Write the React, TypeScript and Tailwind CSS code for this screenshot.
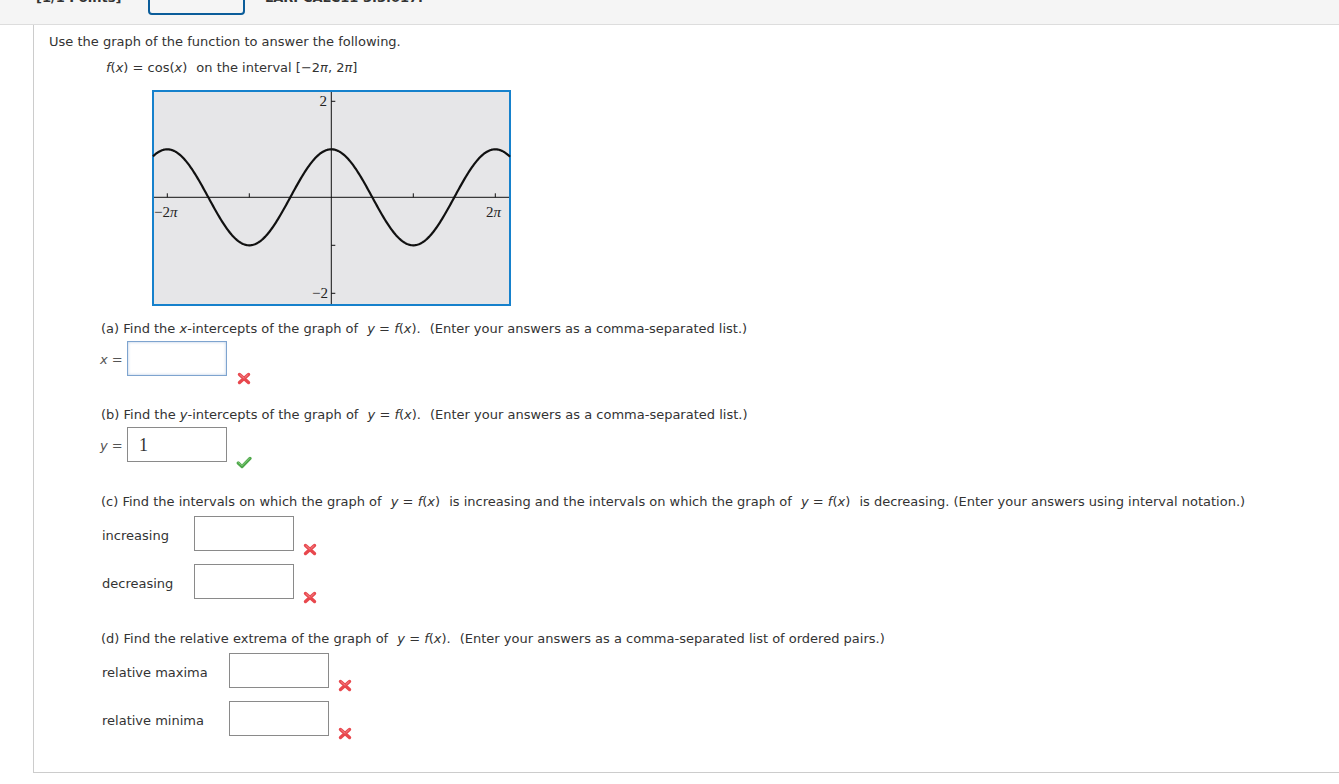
import React from "react";

const F = () => (
  <span>
    <i>f</i>(<i>x</i>)
  </span>
);

const YF = ({ end }: { end?: boolean }) => (
  <span className={end ? "ml-[5px]" : "mx-[5px]"}>
    <i>y</i> = <F />
  </span>
);

const RedX = () => (
  <svg width="14" height="13" viewBox="0 0 14 13">
    <path d="M2.5 2.5 L11.5 10.5 M11.5 2.5 L2.5 10.5" stroke="#e8474d" strokeWidth="3.4" strokeLinecap="round" fill="none" />
    <path d="M3 2.7 L7 6.2 M11 2.7 L8 5.4" stroke="#f3888c" strokeWidth="1" strokeLinecap="round" fill="none" />
  </svg>
);

const Check = () => (
  <svg width="16" height="13" viewBox="0 0 16 13">
    <path d="M2.2 7 L6 10.6 L14 2.4" stroke="#4ea84a" strokeWidth="3.2" strokeLinecap="round" strokeLinejoin="round" fill="none" />
    <path d="M2.6 6.7 L6 9.6 L13.4 2.4" stroke="#86cc7f" strokeWidth="1" strokeLinecap="round" fill="none" />
  </svg>
);

function Graph() {
  const W = 359;
  const H = 216;
  const ox = 179.3;
  const oy = 107.3;
  const pi = 82;
  const u = 48;
  const pts: string[] = [];
  for (let px = 1; px <= W - 1; px += 1) {
    const x = ((px - ox) / pi) * Math.PI;
    const y = oy - u * Math.cos(x);
    pts.push(`${px.toFixed(1)},${y.toFixed(2)}`);
  }
  const xt = [-2, -1, 1, 2].map((k) => ox + k * pi);
  const yt = [-2, -1, 1, 2].map((k) => oy - k * u);
  return (
    <svg width={W} height={H} viewBox={`0 0 ${W} ${H}`} className="block">
      <rect x="1" y="1" width={W - 2} height={H - 2} fill="#e6e6e8" stroke="#1681cc" strokeWidth="2" />
      <line x1="2" y1={oy} x2={W - 2} y2={oy} stroke="#111" strokeWidth="1" />
      <line x1={ox} y1="2" x2={ox} y2={H - 2} stroke="#111" strokeWidth="1" />
      {xt.map((x) => (
        <line key={x} x1={x} y1={oy - 4} x2={x} y2={oy} stroke="#111" strokeWidth="1" />
      ))}
      {yt.map((y) => (
        <line key={y} x1={ox} y1={y} x2={ox + 4} y2={y} stroke="#111" strokeWidth="1" />
      ))}
      <polyline points={pts.join(" ")} fill="none" stroke="#111" strokeWidth="2.2" strokeLinejoin="round" />
      <g fontFamily="'Liberation Serif', 'DejaVu Serif', serif" fontSize="15" fill="#222">
        <text x="175" y="16" textAnchor="end">2</text>
        <text x="176" y="208" textAnchor="end">−2</text>
        <text x="2" y="127">
          −2<tspan fontStyle="italic">π</tspan>
        </text>
        <text x="334" y="127">
          2<tspan fontStyle="italic">π</tspan>
        </text>
      </g>
    </svg>
  );
}

const Box = ({ focus, value }: { focus?: boolean; value?: string }) => (
  <div
    className={
      "w-[100px] h-[35px] shrink-0 bg-white flex items-center pl-[11px] " +
      (focus ? "border border-[#7ea4cf] shadow-[inset_0_0_3px_rgba(126,164,207,0.6)]" : "border border-[#8a8a8a]")
    }
  >
    {value ? (
      <span className="text-[18px] text-[#333]" style={{ fontFamily: "'Liberation Serif', serif" }}>
        {value}
      </span>
    ) : null}
  </div>
);

export default function App() {
  return (
    <div
      className="w-[1339px] h-[784px] bg-white text-[#333] text-[13px] leading-[16px] overflow-hidden"
      style={{ fontFamily: "'DejaVu Sans', Verdana, sans-serif" }}
    >
      {/* top bar */}
      <div className="h-[25px] bg-[#f5f5f5] border-b border-[#dddddd] overflow-hidden flex items-start">
        <div className="ml-[36px] -mt-[10px] w-[92px] font-bold text-[#333] text-[13px] leading-[16px] whitespace-nowrap">[1/1 Points]</div>
        <div className="ml-[20px] -mt-[16px] w-[97px] h-[31px] border-2 border-[#0b5d9a] rounded-[4px] flex items-end justify-center pb-[9px] font-bold text-[#0b5d9a] text-[13px] leading-[16px]">
          DETAILS
        </div>
        <div className="ml-[20px] -mt-[10px] font-bold text-[#333] text-[13px] leading-[16px] whitespace-nowrap">LARPCALC11 3.3.017.</div>
      </div>

      {/* panel */}
      <div className="ml-[33px] border-l border-b border-[#cccccc] pl-[15px] pt-[9px] pb-[36px]">
        <div>Use the graph of the function to answer the following.</div>
        <div className="mt-[10px] ml-[57px]">
          <F /> = cos(<i>x</i>)<span className="ml-[9px]">on the interval [−2<i>π</i>, 2<i>π</i>]</span>
        </div>
        <div className="mt-[14px] ml-[103px]">
          <Graph />
        </div>

        {/* (a) */}
        <div className="mt-[14px] pt-[1px] ml-[52px]">
          (a) Find the <i>x</i>-intercepts of the graph of <YF end />.<span className="ml-[9px]">(Enter your answers as a comma-separated list.)</span>
        </div>
        <div className="mt-[4px] ml-[51px] flex items-start h-[35px]">
          <div className="w-[27px] mt-[11px] text-[#555]">
            <i>x</i> =
          </div>
          <Box focus />
          <div className="ml-[10px] mt-[31px]">
            <RedX />
          </div>
        </div>

        {/* (b) */}
        <div className="mt-[30px] pt-[1px] ml-[52px]">
          (b) Find the <i>y</i>-intercepts of the graph of <YF end />.<span className="ml-[9px]">(Enter your answers as a comma-separated list.)</span>
        </div>
        <div className="mt-[4px] ml-[51px] flex items-start h-[35px]">
          <div className="w-[27px] mt-[11px] text-[#555]">
            <i>y</i> =
          </div>
          <Box value="1" />
          <div className="ml-[9px] mt-[29px]">
            <Check />
          </div>
        </div>

        {/* (c) */}
        <div className="mt-[31px] pt-[1px] ml-[52px] whitespace-nowrap">
          (c) Find the intervals on which the graph of <YF /> is increasing and the intervals on which the graph of <YF /> is
          decreasing. (Enter your answers using interval notation.)
        </div>
        <div className="mt-[6px] ml-[53px] flex items-start h-[35px]">
          <div className="w-[92px] mt-[12px]">increasing</div>
          <Box />
          <div className="ml-[9px] mt-[27px]">
            <RedX />
          </div>
        </div>
        <div className="mt-[13px] ml-[53px] flex items-start h-[35px]">
          <div className="w-[92px] mt-[12px]">decreasing</div>
          <Box />
          <div className="ml-[9px] mt-[27px]">
            <RedX />
          </div>
        </div>

        {/* (d) */}
        <div className="mt-[31px] pt-[1px] ml-[52px] whitespace-nowrap">
          (d) Find the relative extrema of the graph of <YF end />.<span className="ml-[9px]">(Enter your answers as a comma-separated list of ordered pairs.)</span>
        </div>
        <div className="mt-[6px] ml-[53px] flex items-start h-[35px]">
          <div className="w-[127px] mt-[12px]">relative maxima</div>
          <Box />
          <div className="ml-[9px] mt-[26px]">
            <RedX />
          </div>
        </div>
        <div className="mt-[13px] ml-[53px] flex items-start h-[35px]">
          <div className="w-[127px] mt-[12px]">relative minima</div>
          <Box />
          <div className="ml-[9px] mt-[26px]">
            <RedX />
          </div>
        </div>
      </div>
    </div>
  );
}
